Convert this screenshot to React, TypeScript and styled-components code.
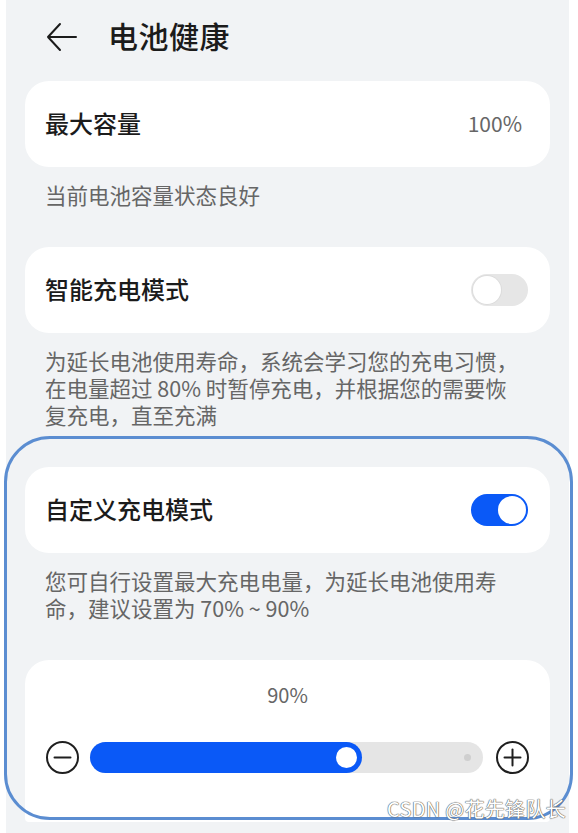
import React from 'react';
import styled, { createGlobalStyle } from 'styled-components';

const GlobalStyle = createGlobalStyle`
  html, body {
    margin: 0;
    padding: 0;
    background: #ffffff;
  }
  body {
    font-family: "Noto Sans CJK SC", "Noto Sans", sans-serif;
    -webkit-font-smoothing: antialiased;
  }
`;

const Page = styled.div`
  position: relative;
  display: flex;
  height: 833px;
  overflow: hidden;
  background: #ffffff;
`;

const Screen = styled.div`
  margin-left: 6px;
  width: 563px;
  height: 100%;
  background: #f1f3f5;
  display: flex;
  flex-direction: column;
  padding: 0 19px;
  box-sizing: border-box;
`;

const Header = styled.header`
  display: flex;
  align-items: center;
  gap: 30px;
  height: 72px;
  padding-left: 21px;
  margin-bottom: 9px;
`;

const BackButton = styled.button`
  display: flex;
  align-items: center;
  justify-content: center;
  width: 32px;
  height: 30px;
  margin-top: 2px;
  padding: 0;
  border: none;
  background: transparent;
  cursor: pointer;
`;

const Title = styled.h1`
  margin: 0 0 3px;
  font-size: 30px;
  font-weight: 500;
  color: #1b1b1b;
  letter-spacing: 0.5px;
`;

const Card = styled.div<{ $cut?: boolean }>`
  background: #ffffff;
  border-radius: ${({ $cut }) => ($cut ? '24px 24px 4px 4px' : '24px')};
`;

const Row = styled.div`
  display: flex;
  align-items: center;
  justify-content: space-between;
  height: 86px;
  padding: 0 22px 0 20px;
  box-sizing: border-box;
`;

const Label = styled.span`
  margin-bottom: 3px;
  font-size: 24px;
  font-weight: 500;
  color: #1b1b1b;
`;

const Value = styled.span`
  margin: 0 6px 3px 0;
  font-size: 21px;
  color: #666666;
`;

const Caption = styled.p`
  margin: 14px 0 39px;
  padding: 0 20px;
  font-size: 21.5px;
  line-height: 27px;
  color: #666666;
`;

const Track = styled.div<{ $on: boolean }>`
  position: relative;
  width: 57px;
  height: 32px;
  border-radius: 16px;
  background: ${({ $on }) => ($on ? '#0a59f7' : '#e6e6e6')};
`;

const Knob = styled.div<{ $on: boolean }>`
  position: absolute;
  top: 2px;
  left: ${({ $on }) => ($on ? '27px' : '2px')};
  width: 28px;
  height: 28px;
  border-radius: 50%;
  background: #ffffff;
  box-shadow: ${({ $on }) => ($on ? 'none' : '0 0 0 1px #dcdcdc')};
`;

const SliderBody = styled.div`
  padding: 22px 20px 48px;
  display: flex;
  flex-direction: column;
  align-items: center;
  gap: 32px;
`;

const Percent = styled.div`
  font-size: 20px;
  line-height: 26px;
  color: #666666;
`;

const SliderRow = styled.div`
  display: flex;
  align-items: center;
  width: 100%;
  height: 34px;
`;

const StepButton = styled.button`
  display: flex;
  padding: 0;
  border: none;
  background: transparent;
  cursor: pointer;
`;

const Rail = styled.div`
  position: relative;
  flex: 1;
  height: 31px;
  margin: 0 12px 0 10px;
  border-radius: 16px;
  background: #e5e5e5;
`;

const Fill = styled.div`
  position: relative;
  height: 100%;
  border-radius: 16px;
  background: #0a59f7;
`;

const Thumb = styled.div`
  position: absolute;
  right: 5px;
  top: 5px;
  width: 21px;
  height: 21px;
  border-radius: 50%;
  background: #ffffff;
`;

const EndDot = styled.div`
  position: absolute;
  right: 12px;
  top: 12px;
  width: 7px;
  height: 7px;
  border-radius: 50%;
  background: #cfcfcf;
`;

const Highlight = styled.div`
  position: absolute;
  left: 4px;
  top: 436px;
  width: 569px;
  height: 384px;
  box-sizing: border-box;
  border: 3px solid #5b8dd1;
  border-radius: 46px;
  pointer-events: none;
`;

const Watermark = styled.div`
  position: absolute;
  right: 12px;
  bottom: 10px;
  font-size: 20px;
  color: #ffffff;
  text-shadow: 0 0 1px #5f5f5f, 0 0 1px #5f5f5f, 0 0 1px #5f5f5f;
  letter-spacing: 0.3px;
`;

const Toggle: React.FC<{ on: boolean }> = ({ on }) => (
  <Track $on={on}>
    <Knob $on={on} />
  </Track>
);

const CircleIcon: React.FC<{ plus?: boolean }> = ({ plus }) => (
  <svg width="35" height="35" viewBox="0 0 35 35" fill="none" stroke="#1f1f1f" strokeWidth="2">
    <circle cx="17.5" cy="17.5" r="15.5" />
    <line x1="9.5" y1="17.5" x2="25.5" y2="17.5" strokeLinecap="round" />
    {plus && <line x1="17.5" y1="9.5" x2="17.5" y2="25.5" strokeLinecap="round" />}
  </svg>
);

const level = 0.693;

export default function App() {
  return (
    <>
      <GlobalStyle />
      <Page>
        <Screen>
          <Header>
            <BackButton aria-label="返回">
              <svg width="32" height="30" viewBox="0 0 32 30" fill="none" stroke="#1b1b1b" strokeWidth="2" strokeLinecap="round" strokeLinejoin="round">
                <path d="M30 15H2M14 2L2 15L14 28" />
              </svg>
            </BackButton>
            <Title>电池健康</Title>
          </Header>

          <Card>
            <Row>
              <Label>最大容量</Label>
              <Value>100%</Value>
            </Row>
          </Card>
          <Caption>当前电池容量状态良好</Caption>

          <Card>
            <Row>
              <Label>智能充电模式</Label>
              <Toggle on={false} />
            </Row>
          </Card>
          <Caption>
            为延长电池使用寿命，系统会学习您的充电习惯，
            <br />
            在电量超过 80% 时暂停充电，并根据您的需要恢
            <br />
            复充电，直至充满
          </Caption>

          <Card>
            <Row>
              <Label>自定义充电模式</Label>
              <Toggle on />
            </Row>
          </Card>
          <Caption>
            您可自行设置最大充电电量，为延长电池使用寿
            <br />
            命，建议设置为 70% ~ 90%
          </Caption>

          <Card $cut>
            <SliderBody>
              <Percent>90%</Percent>
              <SliderRow>
                <StepButton aria-label="减少">
                  <CircleIcon />
                </StepButton>
                <Rail>
                  <EndDot />
                  <Fill style={{ width: `${level * 100}%` }}>
                    <Thumb />
                  </Fill>
                </Rail>
                <StepButton aria-label="增加">
                  <CircleIcon plus />
                </StepButton>
              </SliderRow>
            </SliderBody>
          </Card>
        </Screen>
        <Highlight />
        <Watermark>CSDN @花先锋队长</Watermark>
      </Page>
    </>
  );
}
